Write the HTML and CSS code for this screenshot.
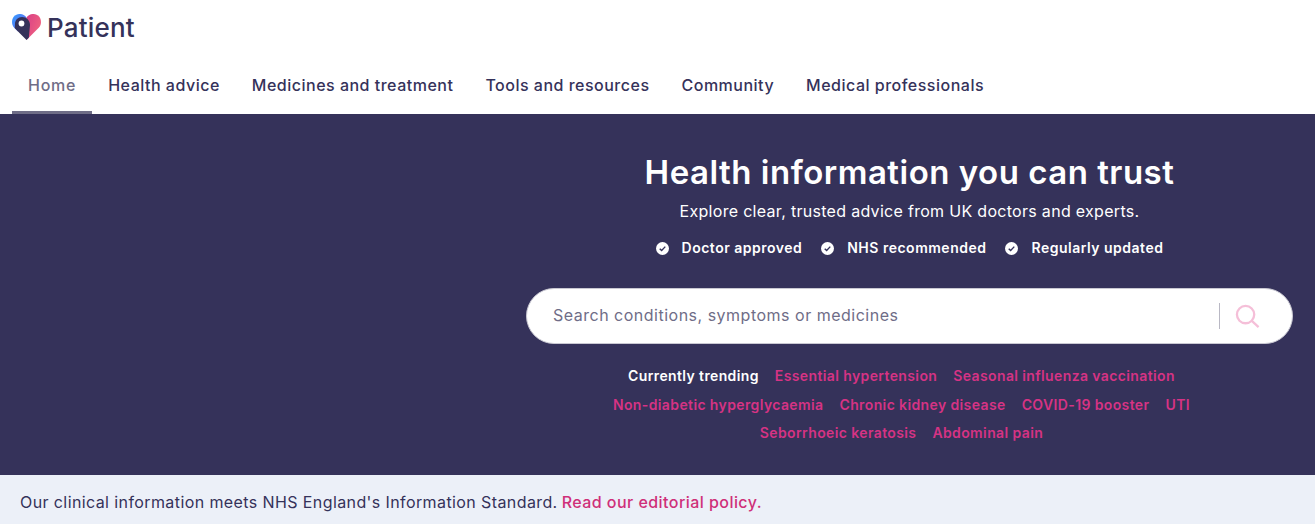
FILE: index.html
```html
<!DOCTYPE html>
<html lang="en">
<head>
<meta charset="utf-8">
<title>Patient</title>
<link rel="stylesheet" href="styles.css">
</head>
<body>
<header class="header">
  <a class="logo" href="#">
    <svg class="logo-mark" viewBox="0 0 29 26" width="29" height="26">
      <defs>
        <linearGradient id="lg1" x1="0" y1="0" x2="1" y2="0.6"><stop offset="0" stop-color="#d93f86"/><stop offset="1" stop-color="#f0637f"/></linearGradient>
        <linearGradient id="lg2" x1="0" y1="0" x2="1" y2="1"><stop offset="0" stop-color="#2f9bff"/><stop offset="1" stop-color="#7a63ee"/></linearGradient>
      </defs>
      <path d="M14.500 26L14.500 3.500C17.500 -0.500 22.500 -1 26 1.500C29.500 4 30 10 27 13.500Z" fill="url(#lg1)"/>
      <path d="M14.500 3.500C11.500 -0.500 6.500 -1 3 1.500C-0.500 4 -1 10 2 13.500L6 17.500L14.500 12Z" fill="url(#lg2)"/>
      <path d="M2.800 14.300L14.500 26L16.800 23.700L18 11C18 6.500 14.500 3 10 3C6 3 3 6 3 10Z" fill="#35325a"/>
      <circle cx="9.500" cy="9.500" r="2.900" fill="#fff"/>
    </svg>
    <span class="logo-text">Patient</span>
  </a>
  <nav class="nav">
    <a class="nav-item nav-active" href="#">Home</a>
    <a class="nav-item" href="#">Health advice</a>
    <a class="nav-item" href="#">Medicines and treatment</a>
    <a class="nav-item" href="#">Tools and resources</a>
    <a class="nav-item" href="#">Community</a>
    <a class="nav-item" href="#">Medical professionals</a>
  </nav>
</header>
<main class="hero">
  <div class="hero-inner">
    <h1 class="hero-title">Health information you can trust</h1>
    <p class="hero-sub">Explore clear, trusted advice from UK doctors and experts.</p>
    <ul class="checks">
      <li class="check"><svg class="check-icon" viewBox="0 0 14 14"><circle cx="7" cy="7" r="7" fill="#fff"/><path d="M4 7.200L6.100 9.200L10 5" fill="none" stroke="#35325a" stroke-width="1.500"/></svg>Doctor approved</li>
      <li class="check"><svg class="check-icon" viewBox="0 0 14 14"><circle cx="7" cy="7" r="7" fill="#fff"/><path d="M4 7.200L6.100 9.200L10 5" fill="none" stroke="#35325a" stroke-width="1.500"/></svg>NHS recommended</li>
      <li class="check"><svg class="check-icon" viewBox="0 0 14 14"><circle cx="7" cy="7" r="7" fill="#fff"/><path d="M4 7.200L6.100 9.200L10 5" fill="none" stroke="#35325a" stroke-width="1.500"/></svg>Regularly updated</li>
    </ul>
    <div class="search">
      <span class="search-text">Search conditions, symptoms or medicines</span>
      <span class="search-divider"></span>
      <svg class="search-icon" viewBox="0 0 26 26"><circle cx="11" cy="11" r="9" fill="none" stroke="#f5bfd8" stroke-width="2.400"/><path d="M17.500 17.500L24.500 24" stroke="#f5bfd8" stroke-width="2.400" fill="none"/></svg>
    </div>
    <div class="trending">
      <div class="trend-row"><span class="trend-label">Currently trending</span><a href="#">Essential hypertension</a><a href="#">Seasonal influenza vaccination</a></div>
      <div class="trend-row"><a href="#">Non-diabetic hyperglycaemia</a><a href="#">Chronic kidney disease</a><a href="#">COVID-19 booster</a><a href="#">UTI</a></div>
      <div class="trend-row"><a href="#">Seborrhoeic keratosis</a><a href="#">Abdominal pain</a></div>
    </div>
  </div>
</main>
<footer class="notice"><span>Our clinical information meets NHS England's Information Standard.</span><a href="#">Read our editorial policy.</a></footer>
</body>
</html>
```
FILE: styles.css
```css
* { box-sizing: border-box; }
html, body { margin: 0; padding: 0; }
body { font-family: "Inter", "Noto Sans", sans-serif; background: #fff; color: #35325a; height: 524px; overflow: hidden; }
a { text-decoration: none; color: inherit; }
.header { height: 114px; padding: 0 12px; display: flex; flex-direction: column; }
.logo { display: flex; align-items: center; height: 56px; gap: 6px; }
.logo-mark { display: block; margin-bottom: 2px; }
.logo-text { font-size: 26px; font-weight: 500; letter-spacing: 0.2px; line-height: 1; }
.nav { display: flex; height: 58px; }
.nav-item { padding: 3px 16px 0; font-size: 16px; font-weight: 500; display: flex; align-items: center; border-bottom: 3px solid transparent; letter-spacing: 0.5px; }
.nav-active { color: #6f6d87; border-bottom-color: #6f6d87; letter-spacing: 0.75px; }
.hero { height: 361px; background: #35325a; padding-left: 526px; padding-right: 22px; color: #fff; }
.hero-inner { display: flex; flex-direction: column; align-items: center; }
.hero-title { margin: 35px 0 0; font-size: 33px; line-height: 46px; font-weight: 600; letter-spacing: 0.5px; }
.hero-sub { margin: 4px 0 0; font-size: 16px; line-height: 24px; letter-spacing: 0.3px; }
.checks { list-style: none; margin: 13px 0 0; padding: 0; display: flex; gap: 19px; font-size: 14px; font-weight: 600; line-height: 24px; letter-spacing: 0.5px; }
.check { display: flex; align-items: center; gap: 13px; }
.check-icon { width: 13px; height: 13px; display: block; }
.search { margin-top: 28px; width: 767px; height: 56px; border-radius: 28px; background: #fff; border: 1px solid #c9c8d2; display: flex; align-items: center; padding: 0 32px 0 26px; color: #6f6d87; }
.search-text { flex: 1; font-size: 16px; letter-spacing: 0.5px; padding-bottom: 3px; }
.search-divider { width: 1px; height: 26px; background: #b9b8c4; margin-right: 15px; }
.search-icon { width: 25px; height: 25px; display: block; }
.trending { margin-top: 18px; padding-right: 16px; font-size: 14px; font-weight: 600; color: #d63384; letter-spacing: 0.38px; }
.trend-row { display: flex; justify-content: center; gap: 16px; line-height: 28.500px; }
.trend-label { color: #fff; }
.notice { height: 49px; background: #ecf0f8; padding: 4px 20px 0; display: flex; align-items: center; gap: 4px; font-size: 16px; color: #35325a; letter-spacing: 0.4px; }
.notice a { color: #cf2f79; font-weight: 500; letter-spacing: 0.45px; }
```
